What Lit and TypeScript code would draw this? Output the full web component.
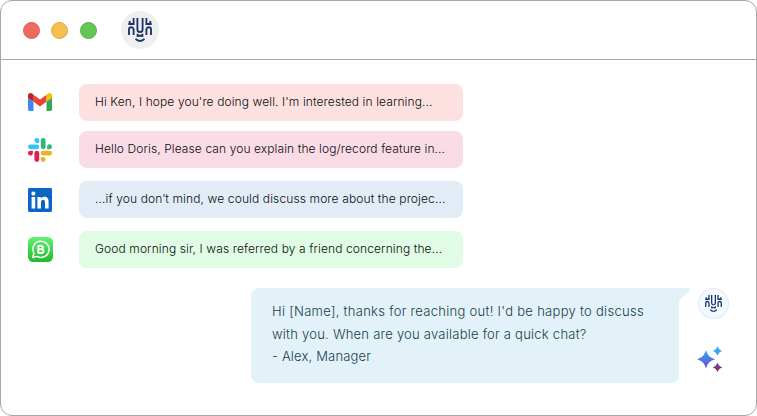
import { LitElement, html, css, svg } from "lit";
import { customElement, property } from "lit/decorators.js";

const gmail = svg`<svg viewBox="0 0 24 18" width="24" height="18">
  <path fill="#4285f4" d="M0 4.4 5.5 8.5V18H1.7A1.7 1.7 0 0 1 0 16.3Z"/>
  <path fill="#34a853" d="M24 4.4 18.5 8.5V18h3.8a1.7 1.7 0 0 0 1.7-1.7Z"/>
  <path fill="#ea4335" d="M5.4 1.7 12 6.6l6.6-4.9v6.9L12 13.5 5.4 8.6Z"/>
  <path fill="#c5221f" d="M0 4.7V2.4C0 .3 2.4-.7 4.1.6l1.4 1.1v6.9Z"/>
  <path fill="#fbbc04" d="M24 4.7V2.4c0-2.1-2.4-3.1-4.1-1.8l-1.4 1.1v6.9Z"/>
</svg>`;

const slack = svg`<svg viewBox="0 0 24 24" width="24" height="24">
  <g fill="#36c5f0"><path d="M8.8 0a2.4 2.4 0 1 0 0 4.9h2.4V2.4A2.4 2.4 0 0 0 8.8 0"/><rect y="6.4" width="11.2" height="4.8" rx="2.4"/></g>
  <g fill="#2eb67d"><path d="M24 8.8a2.4 2.4 0 1 0-4.9 0v2.4h2.5A2.4 2.4 0 0 0 24 8.8"/><rect x="12.8" width="4.8" height="11.2" rx="2.4"/></g>
  <g fill="#ecb22e"><path d="M15.2 24a2.4 2.4 0 1 0 0-4.9h-2.4v2.5a2.4 2.4 0 0 0 2.4 2.4"/><rect x="12.8" y="12.8" width="11.2" height="4.8" rx="2.4"/></g>
  <g fill="#e01e5a"><path d="M0 15.2a2.4 2.4 0 1 0 4.9 0v-2.4H2.4A2.4 2.4 0 0 0 0 15.2"/><rect x="6.4" y="12.8" width="4.8" height="11.2" rx="2.4"/></g>
</svg>`;

const linkedin = svg`<svg viewBox="0 0 24 24" width="24" height="24">
  <rect width="24" height="24" rx="1.4" fill="#0a66c2"/>
  <circle cx="5.4" cy="5.6" r="2.05" fill="#fff"/>
  <path fill="#fff" d="M3.6 9.1h3.6v11.4H3.6ZM9.4 9.1h3.4v1.6c.6-1 1.8-1.9 3.6-1.9 3.4 0 4.2 2.3 4.2 5.3v6.4H17v-5.7c0-1.4-.1-3-1.9-3s-2.1 1.4-2.1 2.9v5.8H9.4Z"/>
</svg>`;

const whatsapp = svg`<svg viewBox="0 0 25 25" width="25" height="25">
  <defs><linearGradient id="wa" x2="0" y2="1"><stop stop-color="#5ff36f"/><stop offset="1" stop-color="#22b92d"/></linearGradient></defs>
  <rect width="25" height="25" rx="5.2" fill="url(#wa)"/>
  <path d="M4.7 20.6 5.9 16.3a8.1 8.1 0 1 1 3.1 3.1Z" fill="none" stroke="#fff" stroke-width="1.5" stroke-linejoin="round"/>
  <path d="M10.3 8.9h2.9a1.7 1.7 0 0 1 0 3.4h-2.9Zm0 3.4h3.3a1.85 1.85 0 0 1 0 3.7h-3.3Z" fill="none" stroke="#fff" stroke-width="1.9" stroke-linejoin="round"/>
</svg>`;

const sparkles = svg`<svg viewBox="0 0 26 26" width="26" height="26">
  <defs>
    <linearGradient id="s1" x2="0" y2="1"><stop offset=".1" stop-color="#2da3f0"/><stop offset=".5" stop-color="#4e7be4"/><stop offset="1" stop-color="#7148d2"/></linearGradient>
    <linearGradient id="s2" x2="0" y2="1"><stop stop-color="#20b5fa"/><stop offset="1" stop-color="#4198e8"/></linearGradient>
    <linearGradient id="s3" x2="0" y2="1"><stop stop-color="#6545bd"/><stop offset="1" stop-color="#9b2854"/></linearGradient>
  </defs>
  <path fill="url(#s1)" d="M9 4C11 9.8 12.4 11.2 18.2 13.2 12.4 15.2 11 16.6 9 22.4 7 16.6 5.6 15.2-.2 13.2 5.6 11.2 7 9.8 9 4Z"/>
  <path fill="url(#s2)" d="M20.5.2C21.6 3.1 22.4 3.9 25.3 5 22.4 6.1 21.6 6.9 20.5 9.8 19.4 6.9 18.6 6.1 15.7 5 18.6 3.9 19.4 3.1 20.5.2Z"/>
  <path fill="url(#s3)" d="M20.5 16.6C21.6 19.5 22.4 20.3 25.3 21.4 22.4 22.5 21.6 23.3 20.5 26 19.4 23.3 18.6 22.5 15.7 21.4 18.6 20.3 19.4 19.5 20.5 16.6Z"/>
</svg>`;

@customElement("brand-mark")
class BrandMark extends LitElement {
  @property({ type: Number }) size = 24;
  static styles = css`
    :host { display: block; line-height: 0; }
  `;
  render() {
    const half = () => svg`
      <path d="M5.6 0V6H.3M1.7 3V6"/>
      <path d="M1 17V11.5a2.3 2.3 0 0 1 4.6 0V17"/>
      <path d="M9.4 0V11.4A2.6 2.6 0 0 0 12 14"/>
      <path d="M9.6 15.8V19M9.6 17.7H12"/>
      <path d="M7.5 20.9Q9.4 23 12 23"/>`;
    return html`<svg viewBox="0 0 24 24" width=${this.size} height=${this.size} fill="none" stroke="#1c3468" stroke-width="1.85">
      <g>${half()}</g>
      <g transform="matrix(-1 0 0 1 24 0)">${half()}</g>
    </svg>`;
  }
}

const messages = [
  { id: "gmail", icon: gmail, shift: "translate(1 3)", text: "Hi Ken, I hope you're doing well. I'm interested in learning..." },
  { id: "slack", icon: slack, shift: "translate(1 1)", text: "Hello Doris, Please can you explain the log/record feature in..." },
  { id: "linkedin", icon: linkedin, shift: "translate(1 1)", text: "...if you don’t mind, we could discuss more about the projec..." },
  { id: "whatsapp", icon: whatsapp, shift: "translate(1 0)", text: "Good morning sir, I was referred by a friend concerning the..." },
];

@customElement("app-root")
class AppRoot extends LitElement {
  static styles = css`
    :host { display: block; height: 416px; font-family: "Inter", "Open Sans", sans-serif; }
    * { box-sizing: border-box; }
    .window { height: 416px; border: 1px solid #a8a8a8; border-radius: 12px; background: #fff; overflow: hidden; }
    header { height: 59px; border-bottom: 1px solid #a8a8a8; display: flex; align-items: center; padding-left: 22px; }
    .dot { width: 17px; height: 17px; border-radius: 50%; margin-right: 11.4px; }
    .red { background: #ed6a5e; border: 1px solid #dc6156; }
    .yellow { background: #f5be4f; border: 1px solid #dfa941; }
    .green { background: #63c655; border: 1px solid #54b046; }
    .brand { width: 38px; height: 38px; border-radius: 50%; background: #efefef; margin-left: 13px; display: grid; place-items: center; }
    .list { padding: 24px 0 0 26px; }
    .row { display: flex; align-items: center; height: 37px; margin-bottom: 13px; }
    .row.gmail { margin-bottom: 10px; }
    .row.whatsapp { margin-bottom: 0; }
    .icon { width: 26px; height: 26px; margin-right: 26px; display: grid; place-items: center; border-radius: 2px; }
    .icon.linkedin { box-shadow: 0 1px 7px rgba(0, 0, 0, 0.04); }
    .icon svg { display: block; }
    .bubble { width: 384px; height: 37px; border-radius: 8px; padding-left: 16px; line-height: 36px; font-size: 12px; font-weight: 350; color: #0c0c0e; white-space: nowrap; }
    .bubble.gmail { background: #fde1e0; letter-spacing: 0.1px; }
    .bubble.slack { background: #fadce7; letter-spacing: 0.1px; }
    .bubble.linkedin { background: #e2ecf7; letter-spacing: 0.12px; }
    .bubble.whatsapp { background: #e0fce4; letter-spacing: 0.11px; }
    .reply { display: flex; margin: 20px 0 0 250px; }
    .answer { position: relative; width: 428px; height: 95px; border-radius: 8px 0 8px 8px; background: #e3f2f8; padding: 12px 0 0 21px; font-size: 13px; font-weight: 350; line-height: 22.5px; color: #163e4c; white-space: nowrap; }
    .tail { position: absolute; left: 427px; top: 0; }
    .l1 { letter-spacing: 0.29px; }
    .l2 { letter-spacing: 0.24px; }
    .l3 { letter-spacing: 0.18px; }
    .side { margin-left: 19px; display: flex; flex-direction: column; align-items: flex-start; }
    .avatar { width: 31px; height: 31px; border-radius: 50%; border: 1px solid #e3e8fb; border-top-color: #f9e0ee; background: #f1fbfe; display: grid; place-items: center; }
    .spark { margin: 27px 0 0 -1px; line-height: 0; }
  `;

  render() {
    return html`<div class="window">
      <header>
        <i class="dot red"></i><i class="dot yellow"></i><i class="dot green"></i>
        <div class="brand"><brand-mark .size=${24}></brand-mark></div>
      </header>
      <div class="list">
        ${messages.map((m) => html`<div class="row ${m.id}">
          <div class="icon ${m.id}"><svg width="26" height="26" viewBox="0 0 26 26">
            <g transform=${m.shift}>${m.icon}</g>
          </svg></div>
          <div class="bubble ${m.id}"><span>${m.text}</span></div>
        </div>`)}
      </div>
      <div class="reply">
        <div class="answer">
          <div class="l1">Hi [Name], thanks for reaching out! I'd be happy to discuss</div>
          <div class="l2">with you. When are you available for a quick chat?</div>
          <div class="l3">- Alex, Manager</div>
          <svg class="tail" width="13" height="18" viewBox="0 0 13 18"><path fill="#e3f2f8" d="M0 0H10.5C12.4 0 12.6 2.2 11.2 3.4L3.5 10Q1 12.2 1 16V18H0Z"/></svg>
        </div>
        <div class="side">
          <div class="avatar"><brand-mark .size=${17}></brand-mark></div>
          <div class="spark">${sparkles}</div>
        </div>
      </div>
    </div>`;
  }
}
